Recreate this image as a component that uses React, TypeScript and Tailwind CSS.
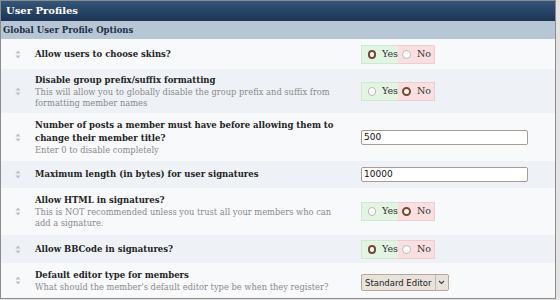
type Control =
  | { kind: "yesno"; value: boolean }
  | { kind: "text"; value: string }
  | { kind: "select"; value: string };

type Setting = {
  label: string;
  desc?: string;
  height: string;
  control: Control;
};

const settings: Setting[] = [
  { label: "Allow users to choose skins?", height: "min-h-[30px]", control: { kind: "yesno", value: true } },
  {
    label: "Disable group prefix/suffix formatting",
    desc: "This will allow you to globally disable the group prefix and suffix from formatting member names",
    height: "min-h-[44px]",
    control: { kind: "yesno", value: false },
  },
  {
    label: "Number of posts a member must have before allowing them to change their member title?",
    desc: "Enter 0 to disable completely",
    height: "min-h-[48px]",
    control: { kind: "text", value: "500" },
  },
  {
    label: "Maximum length (in bytes) for user signatures",
    height: "min-h-[27px]",
    control: { kind: "text", value: "10000" },
  },
  {
    label: "Allow HTML in signatures?",
    desc: "This is NOT recommended unless you trust all your members who can add a signature.",
    height: "min-h-[47px]",
    control: { kind: "yesno", value: false },
  },
  { label: "Allow BBCode in signatures?", height: "min-h-[28px]", control: { kind: "yesno", value: true } },
  {
    label: "Default editor type for members",
    desc: "What should the member's default editor type be when they register?",
    height: "min-h-[35px]",
    control: { kind: "select", value: "Standard Editor" },
  },
];

const SortIcon = () => (
  <svg width="6" height="9" viewBox="0 0 6 9" className="shrink-0">
    <path d="M3 0.5 L5.5 3.5 L0.5 3.5 Z" fill="#b9c0c8" />
    <path d="M3 8.5 L5.5 5.5 L0.5 5.5 Z" fill="#b9c0c8" />
  </svg>
);

const Radio = ({ checked }: { checked: boolean }) =>
  checked ? (
    <span className="inline-block w-[9px] h-[9px] rounded-full border-[2.5px] border-[#7d4532] bg-white" />
  ) : (
    <span className="inline-block w-[9px] h-[9px] rounded-full border border-[#b8b8b8] bg-white" />
  );

const YesNo = ({ value }: { value: boolean }) => (
  <div className="flex h-[19px] text-[9.5px] text-[#333]">
    <label className="flex items-center gap-[6px] w-[37px] pl-[6px] bg-[#e2f5e2] border border-r-0 border-[#cfe8cf]">
      <Radio checked={value} />
      Yes
    </label>
    <label className="flex items-center gap-[6px] w-[37px] pl-[4px] bg-[#f9dfdf] border border-l-0 border-[#f0cccc]">
      <Radio checked={!value} />
      No
    </label>
  </div>
);

const SettingControl = ({ control }: { control: Control }) => {
  if (control.kind === "yesno") return <YesNo value={control.value} />;
  if (control.kind === "text")
    return (
      <div className="w-[167px] h-[15px] border border-[#a89c90] rounded-[2px] bg-white pl-[2px] text-[9px] leading-[13px] text-[#111] [font-family:'DejaVu_Sans',sans-serif]">
        {control.value}
      </div>
    );
  return (
    <div className="inline-flex items-center h-[17px] border border-[#b6a99c] rounded-[2px] bg-[#e9e2da] text-[8.5px] text-[#222] [font-family:'DejaVu_Sans',sans-serif]">
      <span className="px-[3px]">{control.value}</span>
      <span className="flex items-center justify-center w-[13px] h-full border-l border-[#c5b9ad]">
        <svg width="7" height="5" viewBox="0 0 7 5">
          <path d="M1 1 L3.5 3.5 L6 1" stroke="#444" strokeWidth="1.2" fill="none" />
        </svg>
      </span>
    </div>
  );
};

export default function App() {
  return (
    <div className="w-[560px] h-[300px] bg-[#e4e4e4] [font-family:'DejaVu_Serif',serif]">
      <div className="w-[556px] h-[299px] border border-[#8c8c8c] bg-[#f8f9fb] overflow-hidden">
        <div className="h-[20px] bg-gradient-to-b from-[#34557a] to-[#1c3553] pl-[5px] text-white font-bold text-[10px] leading-[19px]">
          User Profiles
        </div>
        <div className="h-[18px] bg-[#b6c6d4] pl-[2px] text-[#1e2f47] font-bold text-[8.5px] leading-[18px]">
          Global User Profile Options
        </div>
        {settings.map((s, i) => (
          <div
            key={s.label}
            className={`flex items-center py-[4px] ${s.height} ${i % 2 === 1 ? "bg-[#eef2f6]" : "bg-[#f8f9fb]"}`}
          >
            <div className="w-[34px] flex justify-center">
              <SortIcon />
            </div>
            <div className="w-[326px] pr-[14px]">
              <div className="font-bold text-[8.5px] leading-[13px] text-[#222]">{s.label}</div>
              {s.desc && <div className="text-[8.3px] leading-[11px] text-[#8a8a8a]">{s.desc}</div>}
            </div>
            <div className="flex-1">
              <SettingControl control={s.control} />
            </div>
          </div>
        ))}
      </div>
    </div>
  );
}
